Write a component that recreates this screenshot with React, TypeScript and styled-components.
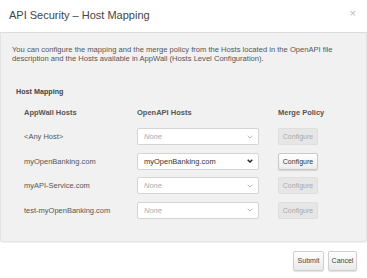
import React from "react";
import styled, { createGlobalStyle } from "styled-components";

const Global = createGlobalStyle`
  html, body { margin: 0; padding: 0; background: #fff; }
  body { font-family: "Liberation Sans", Arial, sans-serif; }
`;

const Dialog = styled.div`
  width: 367px;
  height: 278px;
  background: #fff;
  display: flex;
  flex-direction: column;
`;

const Header = styled.div`
  height: 33px;
  border-bottom: 1px solid #dcdcdc;
  display: flex;
  align-items: center;
  justify-content: space-between;
  padding: 0 9px;
  box-sizing: border-box;
`;

const Title = styled.div`
  font-size: 11px;
  color: #444;
  margin-top: -3px;
`;

const Close = styled.span`
  font-size: 11px;
  color: #bbb;
  margin-top: -6px;
  margin-right: 2px;
`;

const Body = styled.div`
  background: #f1f1f1;
  border: 1px solid #e4e4e4;
  border-top: none;
  border-radius: 0 0 3px 3px;
  padding: 11.5px 11px 22px 11px;
  box-shadow: 0 1px 1px rgba(0, 0, 0, 0.06);
`;

const Intro = styled.p`
  margin: 0;
  font-size: 7.6px;
  line-height: 9.5px;
  color: #555;
`;

const Section = styled.div`
  margin-top: 23px;
  font-size: 7.2px;
  line-height: 9px;
  font-weight: bold;
  color: #444;
  padding-left: 4px;
`;

const Grid = styled.div`
  display: grid;
  grid-template-columns: 113px 141px auto;
  grid-template-rows: 13px;
  grid-auto-rows: 17px;
  row-gap: 7.5px;
  padding-left: 12px;
  margin-top: 12px;
  align-items: center;
`;

const HeadCell = styled.div`
  font-size: 7.5px;
  line-height: 9px;
  font-weight: bold;
  color: #555;
  align-self: start;
`;

const HostLabel = styled.div`
  font-size: 7.5px;
  color: #555;
`;

const Select = styled.div<{ $empty?: boolean }>`
  width: 122px;
  height: 17px;
  box-sizing: border-box;
  background: #fff;
  border: 1px solid #d4d4d4;
  border-radius: 2px;
  display: flex;
  align-items: center;
  justify-content: space-between;
  padding: 0 5px 0 6px;
  font-size: 7.5px;
  color: ${(p) => (p.$empty ? "#aaa" : "#333")};
  font-style: ${(p) => (p.$empty ? "italic" : "normal")};
`;

const ConfigButton = styled.button<{ $disabled?: boolean }>`
  width: 40px;
  height: 17px;
  padding: 0;
  box-sizing: border-box;
  font-family: "Liberation Sans", Arial, sans-serif;
  font-size: 7px;
  border-radius: 2px;
  border: 1px solid ${(p) => (p.$disabled ? "#dedede" : "#c8c8c8")};
  background: ${(p) => (p.$disabled ? "#e6e6e6" : "linear-gradient(#ffffff, #ececec)")};
  color: ${(p) => (p.$disabled ? "#aaa" : "#333")};
  box-shadow: ${(p) => (p.$disabled ? "none" : "0 1px 1px rgba(0,0,0,0.12)")};
`;

const Footer = styled.div`
  display: flex;
  justify-content: flex-end;
  gap: 4px;
  padding: 9px 10px 0 0;
`;

const FooterButton = styled.button<{ $w: number }>`
  width: ${(p) => p.$w}px;
  height: 20px;
  padding: 0;
  font-family: "Liberation Sans", Arial, sans-serif;
  font-size: 7px;
  color: #444;
  border: 1px solid #cfcfcf;
  border-radius: 2px;
  background: linear-gradient(#ffffff, #e9e9e9);
  box-shadow: 0 1px 1px rgba(0, 0, 0, 0.12);
`;

const Chevron = ({ dark }: { dark?: boolean }) => (
  <svg width="6" height="4" viewBox="0 0 6 4">
    <path
      d="M0.7 0.8 L3 3 L5.3 0.8"
      fill="none"
      stroke={dark ? "#222" : "#aaa"}
      strokeWidth={dark ? 1.4 : 0.8}
    />
  </svg>
);

const rows = [
  { host: "<Any Host>", value: "", enabled: false },
  { host: "myOpenBanking.com", value: "myOpenBanking.com", enabled: true },
  { host: "myAPI-Service.com", value: "", enabled: false },
  { host: "test-myOpenBanking.com", value: "", enabled: false },
];

export default function App() {
  return (
    <>
      <Global />
      <Dialog>
        <Header>
          <Title>API Security – Host Mapping</Title>
          <Close>×</Close>
        </Header>
        <Body>
          <Intro>
            You can configure the mapping and the merge policy from the Hosts located in the OpenAPI file
            description and the Hosts available in AppWall (Hosts Level Configuration).
          </Intro>
          <Section>Host Mapping</Section>
          <Grid>
            <HeadCell>AppWall Hosts</HeadCell>
            <HeadCell>OpenAPI Hosts</HeadCell>
            <HeadCell>Merge Policy</HeadCell>
            {rows.map((r) => (
              <React.Fragment key={r.host}>
                <HostLabel>{r.host}</HostLabel>
                <Select $empty={!r.value}>
                  <span>{r.value || "None"}</span>
                  <Chevron dark={!!r.value} />
                </Select>
                <ConfigButton $disabled={!r.enabled}>Configure</ConfigButton>
              </React.Fragment>
            ))}
          </Grid>
        </Body>
        <Footer>
          <FooterButton $w={31}>Submit</FooterButton>
          <FooterButton $w={29}>Cancel</FooterButton>
        </Footer>
      </Dialog>
    </>
  );
}
